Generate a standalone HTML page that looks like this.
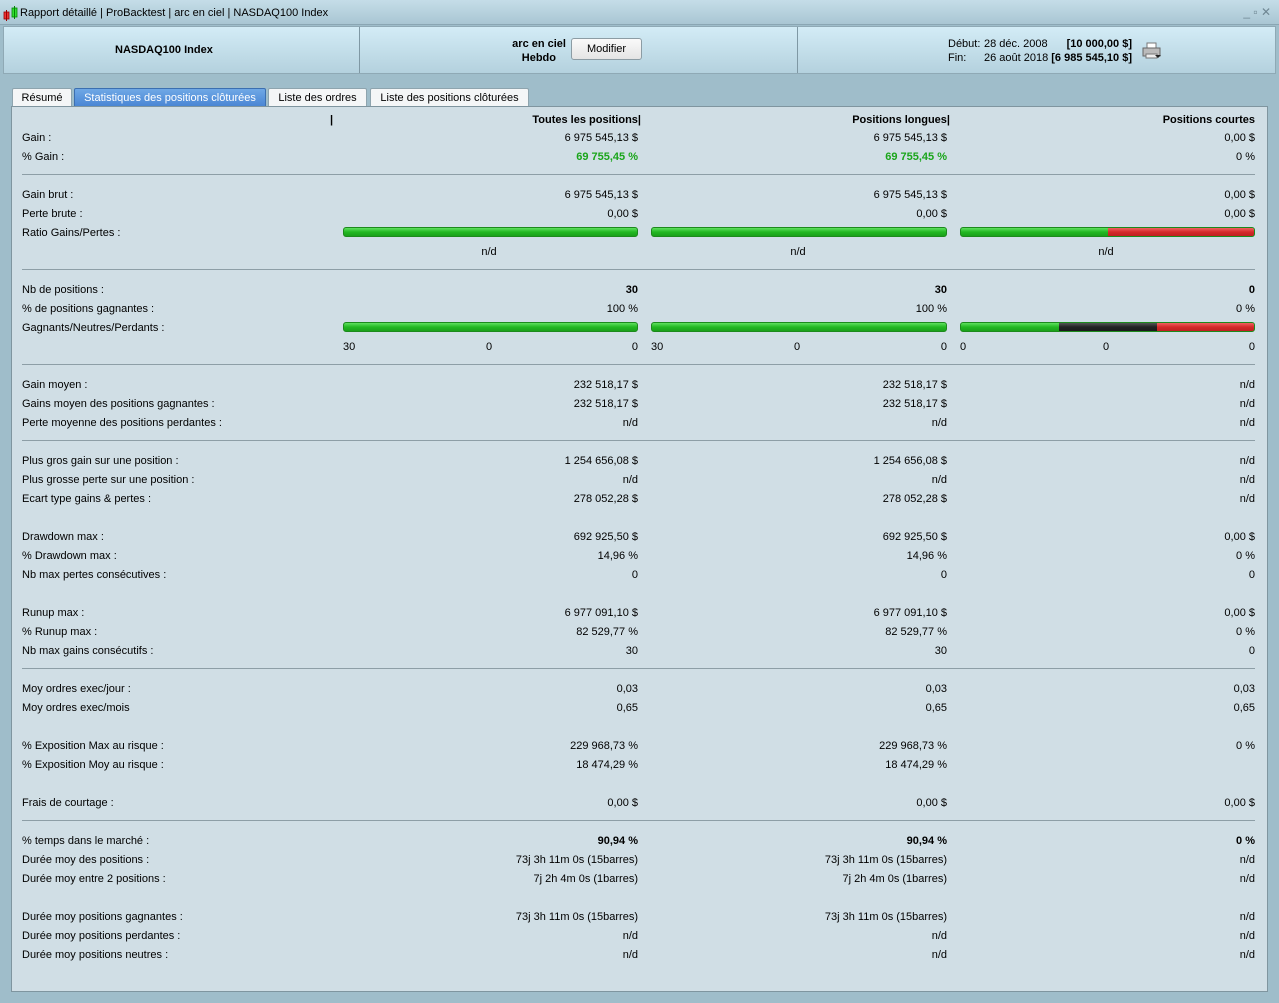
<!DOCTYPE html>
<html><head><meta charset="utf-8"><style>
*{margin:0;padding:0;box-sizing:border-box}
body{width:1279px;height:1003px;overflow:hidden;background:#9fbdca;font-family:"Liberation Sans",Arial,sans-serif;font-size:11px;color:#000;position:relative}
.abs{position:absolute}
#title{left:0;top:0;width:1279px;height:25px;background:linear-gradient(#c5dde8,#a9c6d3);border-bottom:1px solid #8aa6b3;line-height:27px;padding-left:20px;font-size:11px}
#hdr{left:3px;top:26px;width:1273px;height:48px;background:linear-gradient(#d3ecf6,#b4d1de);border:1px solid #8fa9b5}
.div{position:absolute;top:0;width:1px;height:46px;background:#7f98a4}
.btn{position:absolute;left:571px;top:38px;width:71px;height:22px;border:1px solid #8c9ca4;border-radius:3px;background:linear-gradient(#fafafa,#e4e4e4);text-align:center;line-height:21px}
.tab{position:absolute;top:88px;height:18px;line-height:18px;background:#f4f6f7;border:1px solid #8ea4ae;border-bottom:none;text-align:center;border-radius:2px 2px 0 0}
#panel{left:11px;top:106px;width:1257px;height:886px;background:#d0dee5;border:1px solid #7f959f}
.r{position:absolute;left:0;width:1279px;height:19px;line-height:19px}
.r span{top:1px}
.l{position:absolute;left:22px}
.a{position:absolute;right:641px}
.b{position:absolute;right:332px}
.c{position:absolute;right:24px}
.g{color:#1aa51a;font-weight:bold}
.bd{font-weight:bold}
.sep{position:absolute;left:22px;width:1233px;top:8px;height:1px;background:#8d9ea6}
.bar{position:absolute;top:4px;height:10px;border-radius:3px;border:1px solid #1c8a1c;background:linear-gradient(#5ee05e,#22b822 50%,#1aa01a);overflow:hidden}
.red{position:absolute;top:0;bottom:0;background:linear-gradient(#f06060,#d42a2a 50%,#c02020)}
.blk{position:absolute;top:0;bottom:0;background:linear-gradient(#555,#222 50%,#1a1a1a)}
.nd{position:absolute;width:80px;text-align:center}
</style></head><body>
<div id="title" class="abs">Rapport détaillé | ProBacktest | arc en ciel | NASDAQ100 Index</div>
<svg class="abs" style="left:3px;top:6px" width="16" height="16"><rect x="1" y="6" width="5" height="7" fill="#e33" stroke="#900" stroke-width="0.8"/><line x1="3.5" y1="4" x2="3.5" y2="15" stroke="#900"/><rect x="9" y="2" width="5" height="9" fill="#3d3" stroke="#080" stroke-width="0.8"/><line x1="11.5" y1="0" x2="11.5" y2="13" stroke="#080"/></svg>
<div class="abs" style="right:8px;top:5px;color:#6f8793;font-size:12px">_ ▫ ✕</div>
<div id="hdr" class="abs">
<div class="div" style="left:355px"></div><div class="div" style="left:793px"></div>
</div>
<div class="abs bd" style="left:115px;top:44px">NASDAQ100 Index</div>
<div class="abs bd" style="left:500px;top:37px;width:66px;text-align:right;line-height:14px">arc en ciel<br><span style="padding-right:10px">Hebdo</span></div>
<div class="btn">Modifier</div>
<div class="abs" style="left:948px;top:37px;line-height:14px">Début:<br>Fin:</div>
<div class="abs" style="left:984px;top:37px;line-height:14px">28 déc. 2008<br>26 août 2018</div>
<div class="abs bd" style="left:1040px;top:37px;width:92px;text-align:right;line-height:14px">[10 000,00 $]<br>[6 985 545,10 $]</div>
<svg class="abs" style="left:1142px;top:42px" width="20" height="18"><rect x="5" y="1" width="9" height="6" fill="#fff" stroke="#777"/><rect x="1" y="6" width="17" height="8" fill="#bbb" stroke="#666"/><rect x="4" y="12" width="11" height="4" fill="#eee" stroke="#777"/><path d="M13 13l3 3 3-3z" fill="#222"/></svg>
<div class="tab" style="left:12px;width:60px">Résumé</div>
<div class="tab" style="left:74px;width:192px;background:linear-gradient(#6fa8e6,#4a86d4);color:#fff;border-color:#3c6fb0">Statistiques des positions clôturées</div>
<div class="tab" style="left:268px;width:99px">Liste des ordres</div>
<div class="tab" style="left:370px;width:159px">Liste des positions clôturées</div>
<div id="panel" class="abs"></div>

<div class="r bd" style="top:110px"><span class="abs" style="left:330px">|</span><span class="a" style="right:638px">Toutes les positions|</span><span class="b" style="right:329px">Positions longues|</span><span class="c">Positions courtes</span></div>

<div class="r" style="top:128px"><span class="l">Gain :</span><span class="a">6 975 545,13 $</span><span class="b">6 975 545,13 $</span><span class="c">0,00 $</span></div>
<div class="r" style="top:147px"><span class="l">% Gain :</span><span class="a g">69 755,45 %</span><span class="b g">69 755,45 %</span><span class="c">0 %</span></div>
<div class="r" style="top:166px"><div class="sep"></div></div>
<div class="r" style="top:185px"><span class="l">Gain brut :</span><span class="a">6 975 545,13 $</span><span class="b">6 975 545,13 $</span><span class="c">0,00 $</span></div>
<div class="r" style="top:204px"><span class="l">Perte brute :</span><span class="a">0,00 $</span><span class="b">0,00 $</span><span class="c">0,00 $</span></div>
<div class="r" style="top:223px"><span class="l">Ratio Gains/Pertes :</span><div class="bar" style="left:343px;width:295px"></div><div class="bar" style="left:651px;width:296px"></div><div class="bar" style="left:960px;width:295px"><div class="red" style="left:147px;right:0"></div></div></div>
<div class="r" style="top:242px"><span class="nd" style="left:449px">n/d</span><span class="nd" style="left:758px">n/d</span><span class="nd" style="left:1066px">n/d</span></div>
<div class="r" style="top:261px"><div class="sep"></div></div>
<div class="r bd" style="top:280px"><span class="l" style="font-weight:normal">Nb de positions :</span><span class="a">30</span><span class="b">30</span><span class="c">0</span></div>
<div class="r" style="top:299px"><span class="l">% de positions gagnantes :</span><span class="a">100 %</span><span class="b">100 %</span><span class="c">0 %</span></div>
<div class="r" style="top:318px"><span class="l">Gagnants/Neutres/Perdants :</span><div class="bar" style="left:343px;width:295px"></div><div class="bar" style="left:651px;width:296px"></div><div class="bar" style="left:960px;width:295px"><div class="blk" style="left:98px;width:98px"></div><div class="red" style="left:196px;right:0"></div></div></div>
<div class="r" style="top:337px"><span class="abs" style="left:343px">30</span><span class="nd" style="left:449px">0</span><span class="a">0</span><span class="abs" style="left:651px">30</span><span class="nd" style="left:757px">0</span><span class="b">0</span><span class="abs" style="left:960px">0</span><span class="nd" style="left:1066px">0</span><span class="c">0</span></div>
<div class="r" style="top:356px"><div class="sep"></div></div>
<div class="r" style="top:375px"><span class="l">Gain moyen :</span><span class="a">232 518,17 $</span><span class="b">232 518,17 $</span><span class="c">n/d</span></div>
<div class="r" style="top:394px"><span class="l">Gains moyen des positions gagnantes :</span><span class="a">232 518,17 $</span><span class="b">232 518,17 $</span><span class="c">n/d</span></div>
<div class="r" style="top:413px"><span class="l">Perte moyenne des positions perdantes :</span><span class="a">n/d</span><span class="b">n/d</span><span class="c">n/d</span></div>
<div class="r" style="top:432px"><div class="sep"></div></div>
<div class="r" style="top:451px"><span class="l">Plus gros gain sur une position :</span><span class="a">1 254 656,08 $</span><span class="b">1 254 656,08 $</span><span class="c">n/d</span></div>
<div class="r" style="top:470px"><span class="l">Plus grosse perte sur une position :</span><span class="a">n/d</span><span class="b">n/d</span><span class="c">n/d</span></div>
<div class="r" style="top:489px"><span class="l">Ecart type gains &amp; pertes :</span><span class="a">278 052,28 $</span><span class="b">278 052,28 $</span><span class="c">n/d</span></div>
<div class="r" style="top:527px"><span class="l">Drawdown max :</span><span class="a">692 925,50 $</span><span class="b">692 925,50 $</span><span class="c">0,00 $</span></div>
<div class="r" style="top:546px"><span class="l">% Drawdown max :</span><span class="a">14,96 %</span><span class="b">14,96 %</span><span class="c">0 %</span></div>
<div class="r" style="top:565px"><span class="l">Nb max pertes consécutives :</span><span class="a">0</span><span class="b">0</span><span class="c">0</span></div>
<div class="r" style="top:603px"><span class="l">Runup max :</span><span class="a">6 977 091,10 $</span><span class="b">6 977 091,10 $</span><span class="c">0,00 $</span></div>
<div class="r" style="top:622px"><span class="l">% Runup max :</span><span class="a">82 529,77 %</span><span class="b">82 529,77 %</span><span class="c">0 %</span></div>
<div class="r" style="top:641px"><span class="l">Nb max gains consécutifs :</span><span class="a">30</span><span class="b">30</span><span class="c">0</span></div>
<div class="r" style="top:660px"><div class="sep"></div></div>
<div class="r" style="top:679px"><span class="l">Moy ordres exec/jour :</span><span class="a">0,03</span><span class="b">0,03</span><span class="c">0,03</span></div>
<div class="r" style="top:698px"><span class="l">Moy ordres exec/mois</span><span class="a">0,65</span><span class="b">0,65</span><span class="c">0,65</span></div>
<div class="r" style="top:736px"><span class="l">% Exposition Max au risque :</span><span class="a">229 968,73 %</span><span class="b">229 968,73 %</span><span class="c">0 %</span></div>
<div class="r" style="top:755px"><span class="l">% Exposition Moy au risque :</span><span class="a">18 474,29 %</span><span class="b">18 474,29 %</span></div>
<div class="r" style="top:793px"><span class="l">Frais de courtage :</span><span class="a">0,00 $</span><span class="b">0,00 $</span><span class="c">0,00 $</span></div>
<div class="r" style="top:812px"><div class="sep"></div></div>
<div class="r bd" style="top:831px"><span class="l" style="font-weight:normal">% temps dans le marché :</span><span class="a">90,94 %</span><span class="b">90,94 %</span><span class="c">0 %</span></div>
<div class="r" style="top:850px"><span class="l">Durée moy des positions :</span><span class="a">73j 3h 11m 0s (15barres)</span><span class="b">73j 3h 11m 0s (15barres)</span><span class="c">n/d</span></div>
<div class="r" style="top:869px"><span class="l">Durée moy entre 2 positions :</span><span class="a">7j 2h 4m 0s (1barres)</span><span class="b">7j 2h 4m 0s (1barres)</span><span class="c">n/d</span></div>
<div class="r" style="top:907px"><span class="l">Durée moy positions gagnantes :</span><span class="a">73j 3h 11m 0s (15barres)</span><span class="b">73j 3h 11m 0s (15barres)</span><span class="c">n/d</span></div>
<div class="r" style="top:926px"><span class="l">Durée moy positions perdantes :</span><span class="a">n/d</span><span class="b">n/d</span><span class="c">n/d</span></div>
<div class="r" style="top:945px"><span class="l">Durée moy positions neutres :</span><span class="a">n/d</span><span class="b">n/d</span><span class="c">n/d</span></div>
</body></html>
